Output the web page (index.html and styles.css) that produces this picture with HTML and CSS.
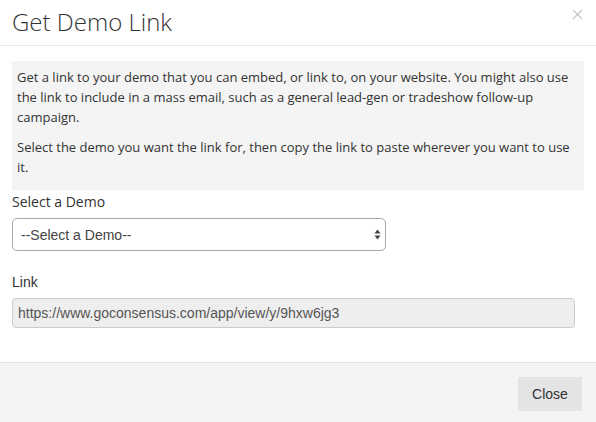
FILE: index.html
```html
<!DOCTYPE html>
<html>
<head>
<meta charset="utf-8">
<link rel="stylesheet" href="styles.css">
</head>
<body>
<div class="modal">
  <div class="modal-header">
    <h4 class="modal-title">Get Demo Link</h4>
    <button class="close-x" type="button" aria-label="Close">
      <svg width="11" height="11" viewBox="0 0 11 11"><path d="M1 1 L10 10 M10 1 L1 10" stroke="#c8c8c8" stroke-width="1.3" fill="none"/></svg>
    </button>
  </div>
  <div class="modal-body">
    <div class="info">
      <p>Get a link to your demo that you can embed, or link to, on your website. You might also use the link to include in a mass email, such as a general lead-gen or tradeshow follow-up campaign.</p>
      <p>Select the demo you want the link for, then copy the link to paste wherever you want to use it.</p>
    </div>
    <label class="label">Select a Demo</label>
    <div class="select-wrap">
      <select class="select"><option>--Select a Demo--</option></select>
      <svg class="arrows" width="7" height="11" viewBox="0 0 7 11"><path d="M3.5 0.5 L6.5 4.5 L0.5 4.5 Z M0.5 6.5 L6.5 6.5 L3.5 10.5 Z" fill="#444"/></svg>
    </div>
    <label class="label label-link">Link</label>
    <input class="link-input" type="text" readonly value="https://www.goconsensus.com/app/view/y/9hxw6jg3">
  </div>
  <div class="modal-footer">
    <button class="btn" type="button">Close</button>
  </div>
</div>
</body>
</html>
```
FILE: styles.css
```css
* { box-sizing: border-box; }
html, body { margin: 0; padding: 0; background: #fff; }
body { width: 596px; height: 422px; overflow: hidden; font-family: "Open Sans", sans-serif; color: #333; }
.modal { width: 596px; height: 422px; display: flex; flex-direction: column; }
.modal-header {
  height: 46px;
  border-bottom: 1px solid #e8e8e8;
  display: flex;
  align-items: flex-start;
  justify-content: space-between;
  padding: 0 12px;
}
.modal-title {
  margin: 0;
  font-weight: 300;
  font-size: 24px;
  line-height: 30px;
  padding-top: 7px;
  color: #333;
}
.close-x {
  border: 0; background: none; padding: 0; margin: 9px 1px 0 0;
  width: 11px; height: 11px; display: block;
}
.close-x svg { display: block; }
.modal-body { padding: 15px 12px 0; flex: 1; }
.info {
  background: #f4f4f4;
  padding: 6px 5px 13px;
  font-size: 13px;
  line-height: 20px;
  color: #333;
}
.info p { margin: 0 0 10px; }
.info p:last-child { margin-bottom: 0; }
.label {
  display: block;
  font-size: 14px;
  line-height: 20px;
  margin: 2px 0 6px;
  color: #333;
}
.select-wrap { position: relative; width: 374px; }
.select {
  appearance: none; -webkit-appearance: none;
  width: 374px; height: 33px;
  border: 1px solid #a9a9a9;
  border-radius: 5px;
  background: #fff;
  font-family: "Liberation Sans", Arial, sans-serif;
  font-size: 14px;
  color: #444;
  padding: 0 8px;
  margin: 0;
}
.arrows { position: absolute; right: 5px; top: 11px; }
.label-link {
  font-family: "Liberation Sans", Arial, sans-serif;
  margin: 21px 0 6px;
}
.link-input {
  display: block;
  width: 563px; height: 30px;
  border: 1px solid #ccc;
  border-radius: 4px;
  background: #eee;
  font-family: "Liberation Sans", Arial, sans-serif;
  font-size: 14px;
  color: #555;
  padding: 0 5px;
  margin: 0;
}
.modal-footer {
  height: 60px;
  border-top: 1px solid #e3e3e3;
  background: #f4f4f4;
  display: flex;
  justify-content: flex-end;
  align-items: flex-start;
  padding: 14px 14px 0;
}
.btn {
  width: 64px; height: 34px;
  border: 0;
  border-radius: 1px;
  background: #e4e4e4;
  font-family: "Liberation Sans", Arial, sans-serif;
  font-size: 14px;
  color: #333;
  padding: 0;
}
```
